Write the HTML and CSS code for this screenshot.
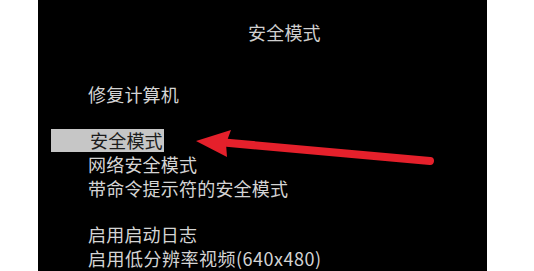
FILE: index.html
```html
<!DOCTYPE html>
<html lang="zh-CN">
<head>
<meta charset="utf-8">
<title>安全模式</title>
<link rel="stylesheet" href="styles.css">
</head>
<body>
<div class="page">
  <div class="screen">
    <div class="title">安全模式</div>
    <div class="menu">
      <div class="group">
        <div class="item">修复计算机</div>
      </div>
      <div class="group">
        <div class="item"><span class="selected">安全模式</span></div>
        <div class="item">网络安全模式</div>
        <div class="item">带命令提示符的安全模式</div>
      </div>
      <div class="group">
        <div class="item">启用启动日志</div>
        <div class="item">启用低分辨率视频(640x480)</div>
      </div>
    </div>
  </div>
  <svg class="arrow" width="534" height="271" viewBox="0 0 534 271" xmlns="http://www.w3.org/2000/svg">
    <line x1="224" y1="142.5" x2="430" y2="161" stroke="#e5202b" stroke-width="8" stroke-linecap="round"/>
    <polygon points="196,141 231,130 226,143.5 227,157" fill="#e5202b"/>
  </svg>
</div>
</body>
</html>
```
FILE: styles.css
```css
html, body {
  margin: 0;
  padding: 0;
  background: #ffffff;
}
.page {
  position: relative;
  width: 534px;
  height: 271px;
  overflow: hidden;
}
.screen {
  margin-left: 38px;
  width: 449px;
  height: 271px;
  box-sizing: border-box;
  background: #000000;
  padding-top: 20px;
  font-family: "Noto Sans CJK SC", "Noto Sans", sans-serif;
  font-size: 18px;
  line-height: 24px;
  color: #d4d4d4;
  letter-spacing: 0.2px;
}
.title {
  padding-left: 210px;
  height: 24px;
  color: #cfcfcf;
}
.menu {
  padding-left: 50px;
  margin-top: 38px;
  display: flex;
  flex-direction: column;
  gap: 22px;
}
.item {
  height: 24px;
  white-space: nowrap;
}
.group:last-child .item:last-child {
  letter-spacing: 0.5px;
}
.selected {
  display: inline-block;
  margin-left: -37px;
  padding-left: 39px;
  padding-right: 1px;
  margin-top: 1px;
  height: 23px;
  line-height: 23px;
  background: #c6c6c6;
  color: #1c1c1c;
}
.arrow {
  position: absolute;
  left: 0;
  top: 0;
  pointer-events: none;
}
```
